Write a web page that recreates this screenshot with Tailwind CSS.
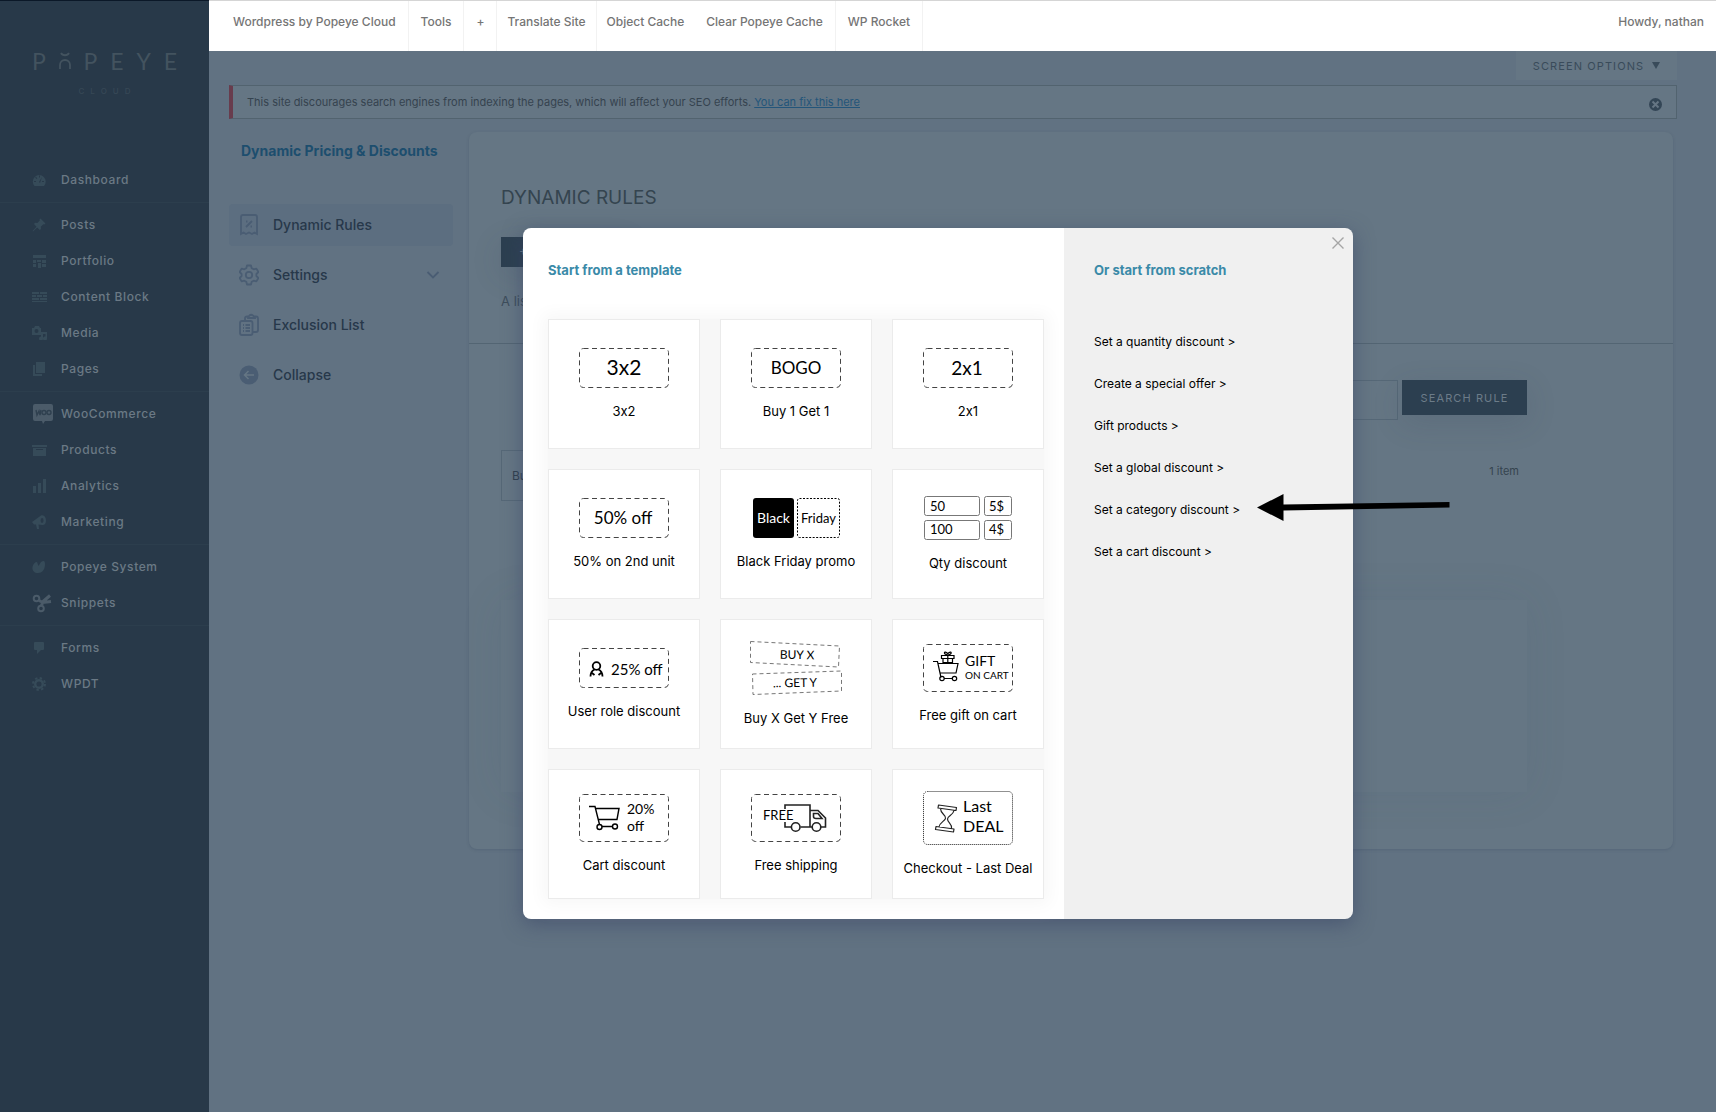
<!DOCTYPE html>
<html lang="en">

<head>
    <meta charset="UTF-8">
    <meta name="viewport" content="width=device-width, initial-scale=1.0">
    <title>Dynamic Rules</title>
    <script src="https://cdn.jsdelivr.net/npm/@tailwindcss/browser@4"></script>
</head>

<body class="relative flex min-h-screen bg-[#617282] font-['Inter',sans-serif] text-[#283949]">

<!-- Sidebar -->
<aside class="w-[209px] shrink-0 border-t border-[#0b1828] bg-[#283949] text-xs font-medium tracking-wider text-[#6b7985]">
    <!-- Logo -->
    <div class="flex flex-col items-center pt-[46px] pb-[65px] text-[#43535f]">
        <div class="flex w-[145px] items-center justify-between font-['Lato',sans-serif] text-[23px] leading-7 font-normal tracking-normal">
            <span>P</span>
            <svg class="h-[18px] w-3" viewBox="0 0 12 18" fill="none" stroke="currentColor" stroke-width="1.800">
                <path d="M2 1c1.500 3 6.500 3 8 0M1 17v-4a5 5 0 0 1 10 0v4"/>
            </svg>
            <span>P</span><span>E</span><span>Y</span><span>E</span>
        </div>
        <div class="mt-[10px] flex w-[52px] justify-between text-[8px] leading-3 tracking-normal text-[#374856]">
            <span>C</span><span>L</span><span>O</span><span>U</span><span>D</span>
        </div>
    </div>

    <nav class="text-[#364b59]">
        <ul class="border-b border-[#2c3e4d] pb-1">
            <li><a href="#" class="flex h-9 items-center gap-2 pl-8">
                <svg class="w-[21px]" height="14" viewBox="0 0 21 14"><path fill="currentColor" fill-rule="evenodd" d="M2.500 13A6.500 6.500 0 1 1 12 13zM7 2.500v2h1v-2zM3.200 4.500l1.400 1.400.7-.7-1.400-1.400zM2 8v1h2V8zM10 4l-3 5 1 1zM10 8v1h2V8z"/></svg>
                <span class="text-[#6b7985]">Dashboard</span></a></li>
        </ul>
        <ul class="border-b border-[#2c3e4d] py-1">
            <li><a href="#" class="flex h-9 items-center gap-2 pl-8">
                <svg class="w-[21px]" height="14" viewBox="0 0 21 14"><path fill="currentColor" d="M8.500.5l5 5-1.200 1-1-.3-2.500 2.500.2 2.300-1.200 1-2.600-2.600L1 13.500l-.5-.5 4-4.300L2 6l1-1.200 2.300.2 2.500-2.500-.3-1z"/></svg>
                <span class="text-[#6b7985]">Posts</span></a></li>
            <li><a href="#" class="flex h-9 items-center gap-2 pl-8">
                <svg class="w-[21px]" height="14" viewBox="0 0 21 14"><path fill="currentColor" d="M1 1h13v3H1zM1 6h3v3H1zM5 6h4v2H5zM10 6h4v3h-4zM1 10h3v3H1zM6 9h3v5H6zM10 10h4v3h-4z"/></svg>
                <span class="text-[#6b7985]">Portfolio</span></a></li>
            <li><a href="#" class="flex h-9 items-center gap-2 pl-8">
                <svg class="w-[21px]" height="14" viewBox="0 0 21 14"><path fill="currentColor" d="M0 2h7v2H0zM8 2h7v2H8zM0 5h4v2H0zM5 5h5v2H5zM11 5h4v2h-4zM0 8h7v2H0zM8 8h7v2H8zM0 11h15v1H0z"/></svg>
                <span class="text-[#6b7985]">Content Block</span></a></li>
            <li><a href="#" class="flex h-9 items-center gap-2 pl-8">
                <svg class="w-[21px]" height="14" viewBox="0 0 21 14"><path fill="currentColor" fill-rule="evenodd" d="M0 2h2l1-2h4l1 2h1v7H0zM4.500 3a2 2 0 1 0 0 4 2 2 0 0 0 0-4zM9 6h6v6.500a2 2 0 1 1-1.500-2V8H11v4.500a2 2 0 1 1-2-2z"/></svg>
                <span class="text-[#6b7985]">Media</span></a></li>
            <li><a href="#" class="flex h-9 items-center gap-2 pl-8">
                <svg class="w-[21px]" height="14" viewBox="0 0 21 14"><path fill="currentColor" d="M4 0h9v11H4zM1 3h2v9h7v2H1z"/></svg>
                <span class="text-[#6b7985]">Pages</span></a></li>
        </ul>
        <ul class="border-b border-[#2c3e4d] py-1">
            <li><a href="#" class="flex h-9 items-center gap-2 pl-8">
                <svg class="w-[21px]" height="20" viewBox="0 0 21 20"><path fill="#4b5b69" d="M3 0h16q2 0 2 2v13q0 2-2 2h-6l-2 3-1-3H3q-2 0-2-2V2q0-2 2-2z"/><path fill="none" stroke="#2f404f" stroke-width="1.400" d="M4 6l1 5 2-4 1 4 1-5"/><circle cx="12" cy="8.500" r="2" fill="none" stroke="#2f404f" stroke-width="1.400"/><circle cx="17" cy="8.500" r="2" fill="none" stroke="#2f404f" stroke-width="1.400"/></svg>
                <span class="text-[#6b7985]">WooCommerce</span></a></li>
            <li><a href="#" class="flex h-9 items-center gap-2 pl-8">
                <svg class="w-[21px]" height="14" viewBox="0 0 21 14"><path fill="currentColor" fill-rule="evenodd" d="M0 2h15v2H0zM1 5h13v8H1zM4 6v1h7V6z"/></svg>
                <span class="text-[#6b7985]">Products</span></a></li>
            <li><a href="#" class="flex h-9 items-center gap-2 pl-8">
                <svg class="w-[21px]" height="14" viewBox="0 0 21 14"><path fill="currentColor" d="M1 7h3v7H1zM6 4h3v10H6zM11 0h3v14h-3z"/></svg>
                <span class="text-[#6b7985]">Analytics</span></a></li>
            <li><a href="#" class="flex h-9 items-center gap-2 pl-8">
                <svg class="w-[21px]" height="14" viewBox="0 0 21 14"><path fill="currentColor" fill-rule="evenodd" d="M0 7l9-6.500c3-1 5 1.500 5 5s-2 5-4 4.500L6.500 9.500 7 14H5L4 9.500H2zM10 3a1.500 2.500 0 1 0 .1 5A1.500 2.500 0 0 0 10 3z"/></svg>
                <span class="text-[#6b7985]">Marketing</span></a></li>
        </ul>
        <ul class="border-b border-[#2c3e4d] py-1">
            <li><a href="#" class="flex h-9 items-center gap-2 pl-8">
                <svg class="w-[21px]" height="14" viewBox="0 0 21 14"><path fill="currentColor" d="M5 2l1.500 4L9 2q4-3 4 2c0 6-3 9-7 9S0 10 .5 7 3 2 5 2z"/></svg>
                <span class="text-[#6b7985]">Popeye System</span></a></li>
            <li><a href="#" class="flex h-9 items-center gap-2 pl-8">
                <svg class="w-[21px]" height="20" viewBox="0 0 21 20" fill="none" stroke="#4b5b69" stroke-width="2"><circle cx="4.500" cy="5.500" r="2.800"/><circle cx="9" cy="15.500" r="2.800"/><path stroke-width="3" d="M7 7.500l4 2 8-1M9.500 12.500l1.500-4 7-6"/></svg>
                <span class="text-[#6b7985]">Snippets</span></a></li>
        </ul>
        <ul class="pt-1">
            <li><a href="#" class="flex h-9 items-center gap-2 pl-8">
                <svg class="w-[21px]" height="14" viewBox="0 0 21 14"><path fill="currentColor" d="M3 1h8q1 0 1 1v6q0 1-1 1H9l-4 4V9H3q-1 0-1-1V2q0-1 1-1z"/></svg>
                <span class="text-[#6b7985]">Forms</span></a></li>
            <li><a href="#" class="flex h-9 items-center gap-2 pl-8">
                <svg class="w-[21px]" height="14" viewBox="0 0 21 14" fill="none" stroke="currentColor"><circle cx="7" cy="7" r="3.800" stroke-width="2.500"/><circle cx="7" cy="7" r="6" stroke-width="2" stroke-dasharray="2.400 2.310"/></svg>
                <span class="text-[#6b7985]">WPDT</span></a></li>
        </ul>
    </nav>
</aside>

<div class="min-w-0 flex-1">
    <!-- Top bar -->
    <header class="flex h-[51px] justify-between border-t border-[#d5d5d5] bg-white px-3 text-xs leading-[42px] font-medium text-[#757575]">
        <nav class="flex">
            <a href="#" class="border-r border-[#f2f2f2] px-3">Wordpress by Popeye Cloud</a>
            <a href="#" class="border-r border-[#f2f2f2] px-3">Tools</a>
            <a href="#" class="border-r border-[#f2f2f2] px-3">+</a>
            <a href="#" class="border-r border-[#f2f2f2] px-[10px]">Translate Site</a>
            <a href="#" class="px-[10px]">Object Cache</a>
            <a href="#" class="border-r border-[#f2f2f2] px-3">Clear Popeye Cache</a>
            <a href="#" class="border-r border-[#f2f2f2] px-3">WP Rocket</a>
        </nav>
        <a href="#">Howdy, nathan</a>
    </header>

    <main class="pr-[39px] pl-5">
        <div class="flex justify-end">
            <button type="button" class="flex h-[29px] w-[161px] items-center justify-center gap-2 bg-[#657684] pt-[2px] text-[11px] tracking-widest text-[#394b5a]">
                SCREEN OPTIONS
                <svg width="8" height="10" viewBox="0 0 8 10"><path fill="currentColor" d="M0 0h8L4 7z"/></svg>
            </button>
        </div>

        <!-- Notice -->
        <div class="mt-[5px] flex h-[34px] items-center justify-between border border-l-4 border-[#52636f] border-l-[#683c4d] bg-[#657684] px-[14px] text-[11px] text-[#35434f]">
            <p>This site discourages search engines from indexing the pages, which will affect your SEO efforts. <a href="#" class="text-[#23557a] underline">You can fix this here</a></p>
            <button type="button" aria-label="Dismiss" class="pt-1">
                <svg width="13" height="13" viewBox="0 0 13 13"><circle cx="6.500" cy="6.500" r="6.500" fill="#334656"/><path stroke="#657684" stroke-width="2" d="M3.500 3.500l6 6M9.500 3.500l-6 6"/></svg>
            </button>
        </div>

        <div class="mt-[13px] flex gap-4 pr-1">
            <!-- Plugin menu -->
            <nav class="w-[224px] shrink-0 text-sm font-medium text-[#27384a]">
                <h1 class="mt-2 mb-[42px] ml-3 text-sm leading-[22px] font-bold whitespace-nowrap text-[#1d4e6e]">Dynamic Pricing &amp; Discounts</h1>
                <ul class="space-y-2">
                    <li><a href="#" class="flex h-[42px] items-center gap-[14px] rounded bg-[#5c6e80] pl-[10px]">
                        <svg width="20" height="24" viewBox="0 0 20 24" fill="none" stroke="#4a5d73" stroke-width="1.800"><path d="M2 21V4q0-2 2-2h12q2 0 2 2v17l-2.500-1.500L13 21l-3-1.500L7 21l-2.500-1.500zM7 14l6-6"/><path d="M7 8.500h1.500M11.500 13.500h1.500" stroke-width="2"/></svg>
                        Dynamic Rules</a></li>
                    <li><a href="#" class="flex h-[42px] items-center gap-[14px] pr-[13px] pl-[10px]">
                        <svg width="20" height="22" viewBox="0 0 20 22" fill="none" stroke="#4a5d73" stroke-width="1.800" stroke-linejoin="round"><path d="M8 1.500h4l.7 2.700 2 1.100 2.700-.7 2 3.400-2 2v2l2 2-2 3.400-2.700-.7-2 1.100-.7 2.700H8l-.7-2.700-2-1.100-2.700.7-2-3.400 2-2v-2l-2-2 2-3.400 2.700.7 2-1.100z"/><circle cx="10" cy="11" r="3.200"/></svg>
                        Settings
                        <svg class="ml-auto" width="14" height="8" viewBox="0 0 14 8" fill="none" stroke="#4a5d73" stroke-width="1.800"><path d="M1.500 1L7 6.500 12.500 1"/></svg></a></li>
                    <li><a href="#" class="flex h-[42px] items-center gap-[14px] pl-[10px]">
                        <svg width="20" height="24" viewBox="0 0 20 24" fill="none" stroke="#4a5d73" stroke-width="1.800"><path d="M3 8h8.500q2 0 2 2v10q0 2-2 2H3q-2 0-2-2V10q0-2 2-2zM4 12h1M4 15h1M4 18h1M6.500 12H11M6.500 15H11M6.500 18H11M6 8V5q0-1.500 2-1.500h1M16 3.500h1q2 0 2 2V17q0 2-2 2h-3M9 5V3.500q1 0 1.500-1 1.500-1.500 3.500 0 .5 1 2 1V5z"/></svg>
                        Exclusion List</a></li>
                    <li><a href="#" class="flex h-[42px] items-center gap-[14px] pl-[10px]">
                        <svg width="20" height="20" viewBox="0 0 20 20"><circle cx="10" cy="10" r="9.500" fill="#4a5d73"/><path fill="none" stroke="#657684" stroke-width="1.500" d="M15 10H6M9.500 6L5.500 10l4 4"/></svg>
                        Collapse</a></li>
                </ul>
            </nav>

            <!-- Rules panel -->
            <section class="h-[717px] min-w-0 flex-1 rounded-lg bg-[#657684] pt-[52px] shadow-[0_1px_3px_rgba(60,75,100,0.3)]">
                <h2 class="pl-8 text-[19px] leading-7 text-[#34444f]">DYNAMIC RULES</h2>
                <button type="button" class="mt-[25px] ml-8 block h-[30px] w-32 bg-[#2c3f50] pl-[18px] text-left text-xs text-[#657684] shadow-[0_8px_30px_rgba(44,63,80,0.15)]">+ Add rule</button>
                <p class="mt-6 pl-8 text-[13px] leading-5 text-[#3d4d5b]">A list of your rules</p>
                <hr class="mt-8 border-[#536573]">
                <div class="pr-[146px] pl-8">
                    <form class="mt-9 flex items-start justify-end gap-1">
                        <input type="search" aria-label="Search rules" class="h-10 w-60 border border-[#566877]">
                        <button type="submit" class="h-[35px] w-[125px] bg-[#2c3f50] pt-[2px] text-[11px] tracking-widest text-[#6c7c89] shadow-[0_8px_30px_rgba(44,63,80,0.15)]">SEARCH RULE</button>
                    </form>
                    <div class="mt-[30px] flex h-[51px] items-center justify-between">
                        <select aria-label="Bulk actions" class="h-full w-48 appearance-none border border-[#566877] px-[10px] text-xs text-[#303f4d]"><option>Bulk actions</option></select>
                        <span class="pr-2 pb-2 text-[11px] text-[#35444f]">1 item</span>
                    </div>
                    <div class="mt-[99px] h-48 shadow-[0_0_40px_rgba(60,85,105,0.1)]"></div>
                </div>
            </section>
        </div>
    </main>
</div>

<!-- Template dialog -->
<div class="absolute inset-0 flex items-center justify-center pt-[35px] pl-40">
    <div role="dialog" aria-label="New rule" class="flex w-[830px] rounded-lg shadow-[0_5px_20px_rgba(55,65,100,0.55)]">
        <section class="w-[541px] rounded-l-lg bg-white px-[25px] pt-8 pb-5 text-black">
            <h2 class="mb-[39px] text-[13px] leading-5 font-bold text-[#3a8aa8]">Start from a template</h2>
            <div class="grid w-[496px] grid-cols-3 gap-5 bg-[#f7f7f7] text-[13px] leading-[18px] shadow-[0_0_16px_5px_#f7f7f7] [font-feature-settings:'calt'_0]">
                <button type="button" class="flex h-[130px] flex-col items-center justify-center gap-[14px] border border-[#ebebeb] bg-white">
                    <svg class="font-['Lato',sans-serif]" width="90" height="40" viewBox="0 0 90 40"><rect x=".5" y=".5" width="89" height="39" rx="4" fill="none" stroke="#444" stroke-dasharray="5 3.500"/><text x="45" y="27" font-size="21" text-anchor="middle">3x2</text></svg>
                    3x2
                </button>
                <button type="button" class="flex h-[130px] flex-col items-center justify-center gap-[14px] border border-[#ebebeb] bg-white">
                    <svg class="font-['Lato',sans-serif]" width="90" height="40" viewBox="0 0 90 40"><rect x=".5" y=".5" width="89" height="39" rx="4" fill="none" stroke="#444" stroke-dasharray="5 3.500"/><text x="45" y="26" font-size="17" text-anchor="middle">BOGO</text></svg>
                    Buy 1 Get 1
                </button>
                <button type="button" class="flex h-[130px] flex-col items-center justify-center gap-[14px] border border-[#ebebeb] bg-white">
                    <svg class="font-['Lato',sans-serif]" width="90" height="40" viewBox="0 0 90 40"><rect x=".5" y=".5" width="89" height="39" rx="4" fill="none" stroke="#444" stroke-dasharray="5 3.500"/><text x="44" y="27" font-size="19" text-anchor="middle">2x1</text></svg>
                    2x1
                </button>
                <button type="button" class="flex h-[130px] flex-col items-center justify-center gap-[14px] border border-[#ebebeb] bg-white">
                    <svg class="font-['Lato',sans-serif]" width="90" height="40" viewBox="0 0 90 40"><rect x=".5" y=".5" width="89" height="39" rx="4" fill="none" stroke="#444" stroke-dasharray="5 3.500"/><text x="44" y="26" font-size="17" text-anchor="middle">50% off</text></svg>
                    50% on 2nd unit
                </button>
                <button type="button" class="flex h-[130px] flex-col items-center justify-center gap-[14px] border border-[#ebebeb] bg-white">
                    <svg class="font-['Lato',sans-serif]" width="90" height="40" viewBox="0 0 90 40"><rect x="2" width="41" height="40" rx="3"/><rect x="46.500" y=".5" width="42" height="39" rx="2" fill="none" stroke="#000" stroke-dasharray="2 1.500"/><text x="22.500" y="25" font-size="14" fill="#fff" text-anchor="middle">Black</text><text x="67.500" y="25" font-size="13" text-anchor="middle">Friday</text></svg>
                    Black Friday promo
                </button>
                <button type="button" class="flex h-[130px] flex-col items-center justify-center gap-[14px] border border-[#ebebeb] bg-white">
                    <svg class="font-['Lato',sans-serif]" width="90" height="44" viewBox="0 0 90 44"><g fill="none" stroke="#777"><rect x="1.500" y=".5" width="55" height="19" rx="2"/><rect x="61.500" y=".5" width="27" height="19" rx="2"/><rect x="1.500" y="24.500" width="55" height="19" rx="2"/><rect x="61.500" y="24.500" width="27" height="19" rx="2"/></g><g font-size="13"><text x="7" y="15">50</text><text x="66" y="15">5$</text><text x="7" y="38">100</text><text x="66" y="38">4$</text></g></svg>
                    Qty discount
                </button>
                <button type="button" class="flex h-[130px] flex-col items-center justify-center gap-[14px] border border-[#ebebeb] bg-white">
                    <svg class="font-['Lato',sans-serif]" width="90" height="40" viewBox="0 0 90 40"><rect x=".5" y=".5" width="89" height="39" rx="4" fill="none" stroke="#444" stroke-dasharray="5 3.500"/><g fill="none" stroke="#000" stroke-width="1.800"><circle cx="17.500" cy="18" r="3.800"/><path d="M11.500 28.500c0-4 2-6 4-7M23.500 28.500c0-4-2-6-4-7M13 25l2.500 2M22 25l-2.500 2"/></g><text x="32" y="27" font-size="15">25% off</text></svg>
                    User role discount
                </button>
                <button type="button" class="flex h-[130px] flex-col items-center justify-center gap-[14px] border border-[#ebebeb] bg-white">
                    <svg class="font-['Lato',sans-serif]" width="92" height="54" viewBox="0 0 92 54"><g fill="none" stroke="#777" stroke-dasharray="4 3" stroke-linejoin="round"><path d="M.5.500l89 4.500-1 21-88-4.500zM2.500 33l89-3v20l-88.500 3.500z"/></g><text x="47" y="18" font-size="12" text-anchor="middle" transform="rotate(1 46 18)">BUY X</text><text x="45" y="46" font-size="12" text-anchor="middle" transform="rotate(-1 45 47)">... GET Y</text></svg>
                    Buy X Get Y Free
                </button>
                <button type="button" class="flex h-[130px] flex-col items-center justify-center gap-[14px] border border-[#ebebeb] bg-white">
                    <svg class="font-['Lato',sans-serif]" width="90" height="48" viewBox="0 0 90 48"><rect x=".5" y=".5" width="89" height="47" rx="4" fill="none" stroke="#444" stroke-dasharray="5 3.500"/><g fill="none" stroke="#000" stroke-width="1.200"><path d="M10 17.500h4.500l3.500 16M15.500 19.500H35l-2 9.500H17.500M21 34.500h8.500"/><circle cx="19" cy="34.500" r="2.200"/><circle cx="31.500" cy="34.500" r="2.200"/><path d="M18.500 11.500H31v3H18.500zM20 14.500v4h9.500v-4M24.800 11v8M24.800 11c-5-1-4-5 0-1.500 4-3.500 5 .500 0 1.500"/></g><text x="42" y="22" font-size="14">GIFT</text><text x="42" y="35" font-size="10">ON CART</text></svg>
                    Free gift on cart
                </button>
                <button type="button" class="flex h-[130px] flex-col items-center justify-center gap-[14px] border border-[#ebebeb] bg-white">
                    <svg class="font-['Lato',sans-serif]" width="90" height="48" viewBox="0 0 90 48"><rect x=".5" y=".5" width="89" height="47" rx="4" fill="none" stroke="#444" stroke-dasharray="5 3.500"/><g fill="none" stroke="#000" stroke-width="1.400"><path d="M10 12.500h6l4.500 18M17 14.500h23L38 25.500H19.500M23 32.500h10"/><circle cx="20.500" cy="33" r="2.500"/><circle cx="36" cy="32.500" r="2.500"/></g><text x="48" y="20" font-size="14">20%</text><text x="48" y="37" font-size="14">off</text></svg>
                    Cart discount
                </button>
                <button type="button" class="flex h-[130px] flex-col items-center justify-center gap-[14px] border border-[#ebebeb] bg-white">
                    <svg class="font-['Lato',sans-serif]" width="90" height="48" viewBox="0 0 90 48"><rect x=".5" y=".5" width="89" height="47" rx="4" fill="none" stroke="#444" stroke-dasharray="5 3.500"/><g fill="none" stroke="#222" stroke-width="1.600"><path d="M34 15v-4h25v22H49.500M40 33h-6v-5M59 16.500h8l7.500 7.500v9h-4.500M61 33h-2M62.500 19.500h4.500l4 5h-6q-2.500 0-2.500-2z"/><circle cx="44.700" cy="33" r="4.300"/><circle cx="65.500" cy="33" r="4.300"/></g><text x="12" y="26" font-size="13">FREE</text></svg>
                    Free shipping
                </button>
                <button type="button" class="flex h-[130px] flex-col items-center justify-center gap-[14px] border border-[#ebebeb] bg-white">
                    <svg class="font-['Lato',sans-serif]" width="90" height="54" viewBox="0 0 90 54"><rect x=".5" y=".5" width="89" height="53" rx="4" fill="none" stroke="#222" stroke-dasharray="1 1"/><g fill="none" stroke="#222" stroke-width="1.200" stroke-linejoin="round"><path d="M15.500 14l18 2.500-.5 3-18-2.500zM13 35.500l18 2.500-.5 3-18-2.500zM17.500 17.500c0 6 6 6 5 10-1 3-6 4-6.500 8.500M31 19.500c-1 5-6 5-6.500 8.500 0 4 5 5 4 9.500"/></g><text x="40" y="21" font-size="16">Last</text><text x="40" y="41" font-size="16">DEAL</text></svg>
                    Checkout - Last Deal
                </button>
            </div>
        </section>

        <section class="relative flex-1 rounded-r-lg bg-[#f0f0f0] pt-8 pl-[30px] text-black">
            <button type="button" aria-label="Close" class="absolute top-[9px] right-[9px]">
                <svg width="12" height="12" viewBox="0 0 12 12" stroke="#a5a5a5" stroke-width="1.400"><path d="M.5.500l11 11M11.500.500l-11 11"/></svg>
            </button>
            <h2 class="mb-[52px] text-[13px] leading-5 font-bold text-[#3a8aa8]">Or start from scratch</h2>
            <ul class="space-y-[22px] text-xs leading-5">
                <li><a href="#">Set a quantity discount &gt;</a></li>
                <li><a href="#">Create a special offer &gt;</a></li>
                <li><a href="#">Gift products &gt;</a></li>
                <li><a href="#">Set a global discount &gt;</a></li>
                <li class="relative"><a href="#">Set a category discount &gt;</a>
                    <svg class="absolute -top-[6px] left-[163px]" width="193" height="27" viewBox="0 0 193 27"><path d="M0 13.500L26.500 0v10.500L192.500 8v5.500l-166 3V27z"/></svg>
                </li>
                <li><a href="#">Set a cart discount &gt;</a></li>
            </ul>
        </section>
    </div>
</div>

</body>

</html>
